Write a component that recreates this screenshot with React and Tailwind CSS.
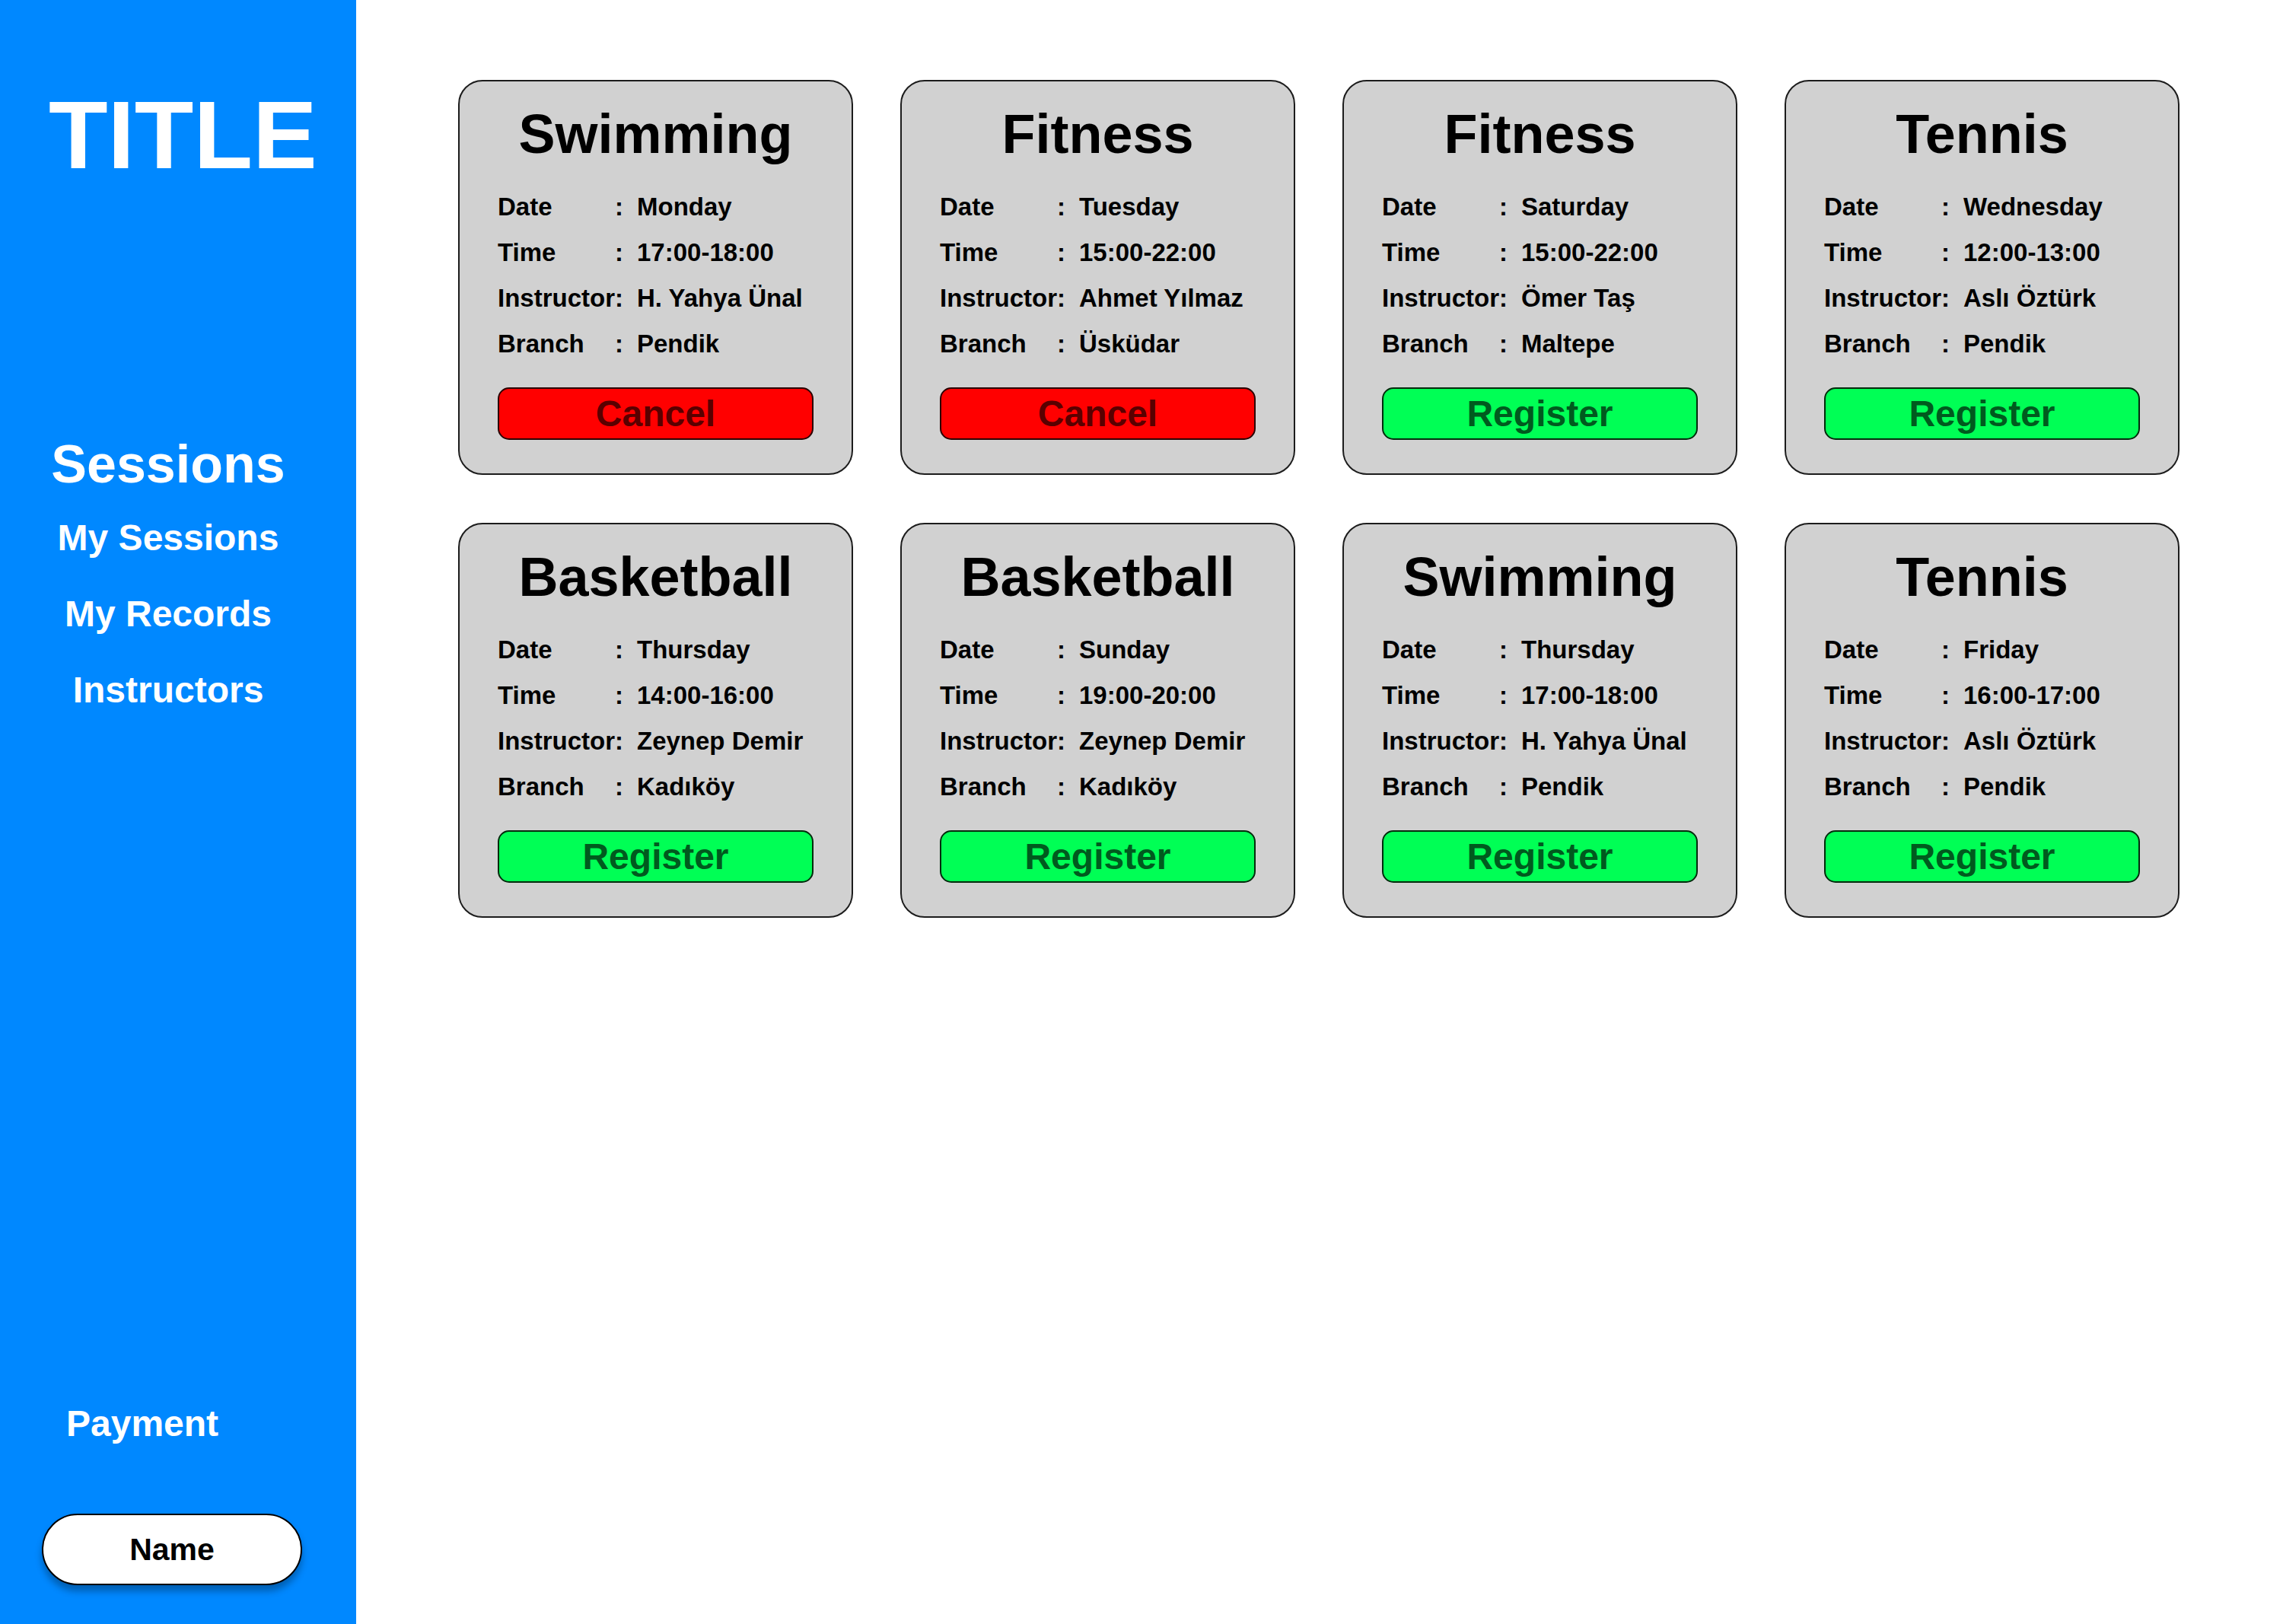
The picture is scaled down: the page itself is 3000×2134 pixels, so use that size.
import React from "react";

const sessions = [
  { sport: "Swimming", date: "Monday", time: "17:00-18:00", instructor: "H. Yahya Ünal", branch: "Pendik", registered: true },
  { sport: "Fitness", date: "Tuesday", time: "15:00-22:00", instructor: "Ahmet Yılmaz", branch: "Üsküdar", registered: true },
  { sport: "Fitness", date: "Saturday", time: "15:00-22:00", instructor: "Ömer Taş", branch: "Maltepe", registered: false },
  { sport: "Tennis", date: "Wednesday", time: "12:00-13:00", instructor: "Aslı Öztürk", branch: "Pendik", registered: false },
  { sport: "Basketball", date: "Thursday", time: "14:00-16:00", instructor: "Zeynep Demir", branch: "Kadıköy", registered: false },
  { sport: "Basketball", date: "Sunday", time: "19:00-20:00", instructor: "Zeynep Demir", branch: "Kadıköy", registered: false },
  { sport: "Swimming", date: "Thursday", time: "17:00-18:00", instructor: "H. Yahya Ünal", branch: "Pendik", registered: false },
  { sport: "Tennis", date: "Friday", time: "16:00-17:00", instructor: "Aslı Öztürk", branch: "Pendik", registered: false },
];

const InfoRow = ({ label, value }) => (
  <div className="grid grid-cols-[167px_1fr] gap-x-[16px] h-[60px] leading-[60px] text-[33px] font-bold text-black whitespace-nowrap">
    <div className="flex justify-between pr-[2px]">
      <span>{label}</span>
      <span>:</span>
    </div>
    <span>{value}</span>
  </div>
);

const SessionCard = ({ session }) => (
  <div className="w-[519px] h-[519px] rounded-[32px] border-2 border-[#1c1c1c] bg-[#d1d1d1] px-[50px] pt-[33px] flex flex-col">
    <h3 className="text-[72px] leading-none font-bold text-center text-black">
      {session.sport}
    </h3>
    <div className="mt-[30px] flex flex-col">
      <InfoRow label="Date" value={session.date} />
      <InfoRow label="Time" value={session.time} />
      <InfoRow label="Instructor" value={session.instructor} />
      <InfoRow label="Branch" value={session.branch} />
    </div>
    {session.registered ? (
      <button className="mt-[27px] h-[69px] w-full rounded-[15px] border-2 border-[#2a0000] bg-[#ff0000] flex items-center justify-center text-[48px] leading-none font-bold text-[#590000]">
        Cancel
      </button>
    ) : (
      <button className="mt-[27px] h-[69px] w-full rounded-[15px] border-2 border-[#002a0c] bg-[#00ff55] flex items-center justify-center text-[48px] leading-none font-bold text-[#005a1e]">
        Register
      </button>
    )}
  </div>
);

const Sidebar = () => (
  <aside className="w-[468px] shrink-0 bg-[#0088ff] flex flex-col text-white">
    <h1 className="mt-[114px] pl-[64px] text-[127px] leading-none font-bold">TITLE</h1>

    <div className="w-[442px] mt-[334px] flex flex-col text-center">
      <h2 className="text-[70px] leading-none font-bold">Sessions</h2>
      <nav className="mt-[12px] flex flex-col text-[48px] leading-[100px] font-bold">
        <a>My Sessions</a>
        <a>My Records</a>
        <a>Instructors</a>
      </nav>
    </div>

    <a className="mt-auto pl-[87px] text-[48px] leading-none font-bold">Payment</a>
    <button className="mt-[94px] mb-[51px] ml-[55px] w-[342px] h-[94px] rounded-full border-2 border-black bg-white shadow-[0_8px_10px_rgba(0,0,0,0.3)] flex items-center justify-center text-[41px] leading-none font-bold text-black">
      Name
    </button>
  </aside>
);

export default function App() {
  return (
    <div className="min-h-screen flex bg-white font-['Liberation_Sans',Arial,sans-serif]">
      <Sidebar />
      <main className="flex-1 pl-[134px] pt-[105px]">
        <div className="grid grid-cols-[repeat(4,519px)] gap-x-[62px] gap-y-[63px]">
          {sessions.map((s, i) => (
            <SessionCard key={i} session={s} />
          ))}
        </div>
      </main>
    </div>
  );
}
